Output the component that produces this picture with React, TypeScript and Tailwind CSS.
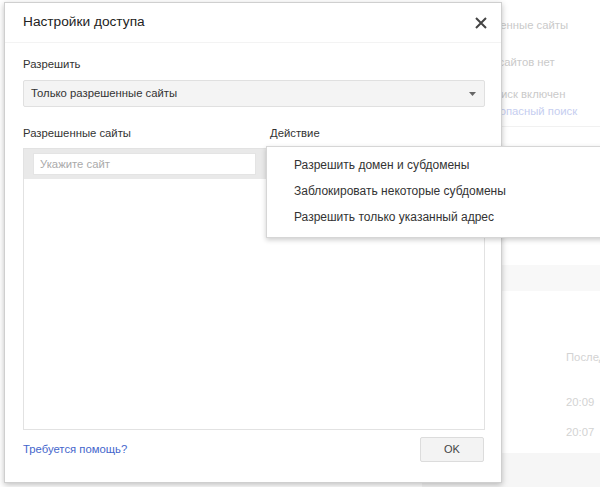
export default function App() {
  const actions = [
    "Разрешить домен и субдомены",
    "Заблокировать некоторые субдомены",
    "Разрешить только указанный адрес",
  ];

  return (
    <div
      className="relative w-[600px] h-[487px] overflow-hidden bg-white text-[12px] text-[#333]"
      style={{ fontFamily: "'Liberation Sans', Arial, sans-serif" }}
    >
      {/* Page behind the dialog */}
      <div className="flex flex-col h-full pl-[422px] text-[11.3px]">
        <div className="flex flex-col pt-[17px] text-[#cacaca] border-b border-[#f1f1f1] h-[127px] whitespace-nowrap">
          <div className="leading-[16px]">Только разрешенные сайты</div>
          <div className="leading-[16px] mt-[21px]">Запрещенных сайтов нет</div>
          <div className="leading-[16px] mt-[16px]">Безопасный поиск включен</div>
          <div className="leading-[16px] mt-[1px] text-[#c6cef0]">Отключить безопасный поиск</div>
        </div>
        <div className="h-[138px]" />
        <div className="h-[26px] bg-[#f8f8f8]" />
        <div className="flex flex-col pl-[144px] text-[#d3d3d3]">
          <div className="mt-[58px] leading-[16px] whitespace-nowrap">Последний</div>
          <div className="mt-[29px] leading-[16px]">20:09</div>
          <div className="mt-[14px] leading-[16px]">20:07</div>
        </div>
        <div className="mt-[13px] flex-1 bg-[#f6f6f6]" />
      </div>

      {/* Dialog */}
      <div className="absolute left-[4px] top-[2px] w-[498px] h-[481px] bg-white border border-[#cfcfcf] shadow-[0_2px_6px_rgba(0,0,0,0.25)] flex flex-col text-[11.3px]">
        <div className="h-[40px] flex items-center justify-between pl-[18px] pr-[14px] border-b border-[#f3f3f3]">
          <div className="text-[13.7px] text-[#222]">Настройки доступа</div>
          <svg width="12" height="12" viewBox="0 0 12 12" className="mt-[1px]">
            <path d="M1 1 L11 11 M11 1 L1 11" stroke="#444" strokeWidth="2" />
          </svg>
        </div>

        <div className="flex flex-col px-[18px] flex-1">
          <div className="mt-[13px] leading-[16px]">Разрешить</div>
          <div className="mt-[8px] h-[27px] w-[462px] flex items-center justify-between pl-[7px] pr-[8px] bg-[#f4f4f4] border border-[#e0e0e0] rounded-[2px]">
            <span className="text-[#333]">Только разрешенные сайты</span>
            <svg width="7" height="4" viewBox="0 0 7 4">
              <path d="M0 0 L7 0 L3.5 4 Z" fill="#666" />
            </svg>
          </div>

          <div className="mt-[18px] flex leading-[16px]">
            <div className="w-[247px]">Разрешенные сайты</div>
            <div>Действие</div>
          </div>

          <div className="mt-[7px] w-[462px] h-[282px] border border-[#e2e2e2] flex flex-col">
            <div className="h-[30px] bg-[#e9e9e9] flex items-center pl-[9px]">
              <div className="w-[223px] h-[22px] bg-white border border-[#e4e4e4] flex items-center pl-[6px] text-[#aaa]">
                Укажите сайт
              </div>
            </div>
            <div className="flex-1" />
          </div>

          <div className="mt-[7px] flex items-center justify-between">
            <span className="text-[#4466cc]">Требуется помощь?</span>
            <div className="w-[64px] h-[25px] mr-[-1px] bg-[#f3f3f3] border border-[#dcdcdc] rounded-[2px] flex items-center justify-center text-[11px] text-[#444]">
              OK
            </div>
          </div>
        </div>
      </div>

      {/* Action dropdown menu */}
      <div className="absolute left-[266px] top-[146px] w-[340px] bg-white border border-[#d6d6d6] shadow-[0_2px_5px_rgba(0,0,0,0.2)] pt-[5px] pb-[7px]">
        {actions.map((a) => (
          <div key={a} className="h-[26px] flex items-center pl-[27px] text-[#333]">
            {a}
          </div>
        ))}
      </div>
    </div>
  );
}
